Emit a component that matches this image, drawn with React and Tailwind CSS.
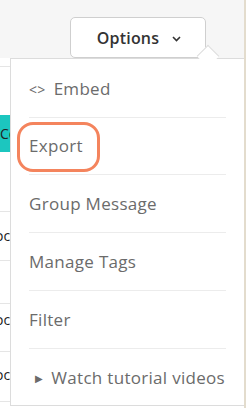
import React from 'react';

const items = ['Group Message', 'Manage Tags', 'Filter'];

export default function App() {
    return (
        <div className="relative w-[246px] h-[408px] overflow-hidden bg-white" style={{ fontFamily: '"Open Sans", "Noto Sans", sans-serif' }}>
            {/* header strip */}
            <div className="h-[58px] bg-[#f6f6f6] flex justify-end items-start pt-[17px] pr-[38px] border-r-2 border-[#e3dccd]">
                <button className="h-[41px] w-[136px] bg-white border border-[#cfcfcf] rounded-[5px] flex items-center justify-center gap-[13px] pl-[2px] text-[16px] tracking-[0.2px] font-semibold text-[#333]">
                    Options
                    <svg width="9" height="6" viewBox="0 0 9 6" className="mt-[2px]">
                        <path d="M1 1l3.5 3.5L8 1" fill="none" stroke="#333" strokeWidth="1.6" />
                    </svg>
                </button>
            </div>

            {/* table behind the menu */}
            <div className="border-r-2 border-[#e3dccd] h-[350px]">
                <div className="h-[9px] border-b border-[#e5e5e5]" />
                <div className="h-[48px]" />
                <div className="h-[37px] w-[12px] bg-[#1cc6bf] text-[14px] leading-[37px] text-[#222] overflow-hidden whitespace-nowrap">Co</div>
                <div className="h-[60px] border-b border-[#e5e5e5]" />
                <div className="h-[49px] border-b border-[#e5e5e5] text-[14px] leading-[48px] text-[#222] -ml-[5px] whitespace-nowrap">oc</div>
                <div className="h-[43px] border-b border-[#e5e5e5]" />
                <div className="h-[48px] border-b border-[#e5e5e5] text-[14px] leading-[32px] text-[#222] -ml-[5px] whitespace-nowrap">oc</div>
                <div className="h-[50px] border-b border-[#e5e5e5] text-[14px] leading-[46px] text-[#222] -ml-[5px] whitespace-nowrap">oc</div>
            </div>

            {/* dropdown */}
            <div className="absolute left-[10px] top-[58px] w-[234px] h-[348px] bg-white border border-[#dcdcdc] border-r-0 text-[17px] tracking-[0.3px] text-[#6b6b6b]">
                <div className="absolute -top-[11px] left-[189px] w-[16px] h-[16px] bg-white border-l border-t border-[#dcdcdc] rotate-45" />
                <div className="relative px-[18px]">
                    <div className="h-[59px] flex items-center border-b border-[#ececec] pt-[2px]">
                        <span className="mr-[8px] text-[14px]">&lt;&gt;</span>Embed
                    </div>
                    <div className="relative h-[57px] flex items-center border-b border-[#ececec]">
                        <div className="absolute -left-[12px] top-[4px] w-[83px] h-[50px] border-[3px] border-[#f4845d] rounded-[16px]" />
                        Export
                    </div>
                    {items.map((label) => (
                        <div key={label} className="h-[58px] flex items-center border-b border-[#ececec]">
                            {label}
                        </div>
                    ))}
                    <div className="h-[58px] flex items-center whitespace-nowrap">
                        <span className="text-[10px] ml-[6px] mr-[8px]">▶</span>Watch tutorial videos
                    </div>
                </div>
            </div>
        </div>
    );
}
